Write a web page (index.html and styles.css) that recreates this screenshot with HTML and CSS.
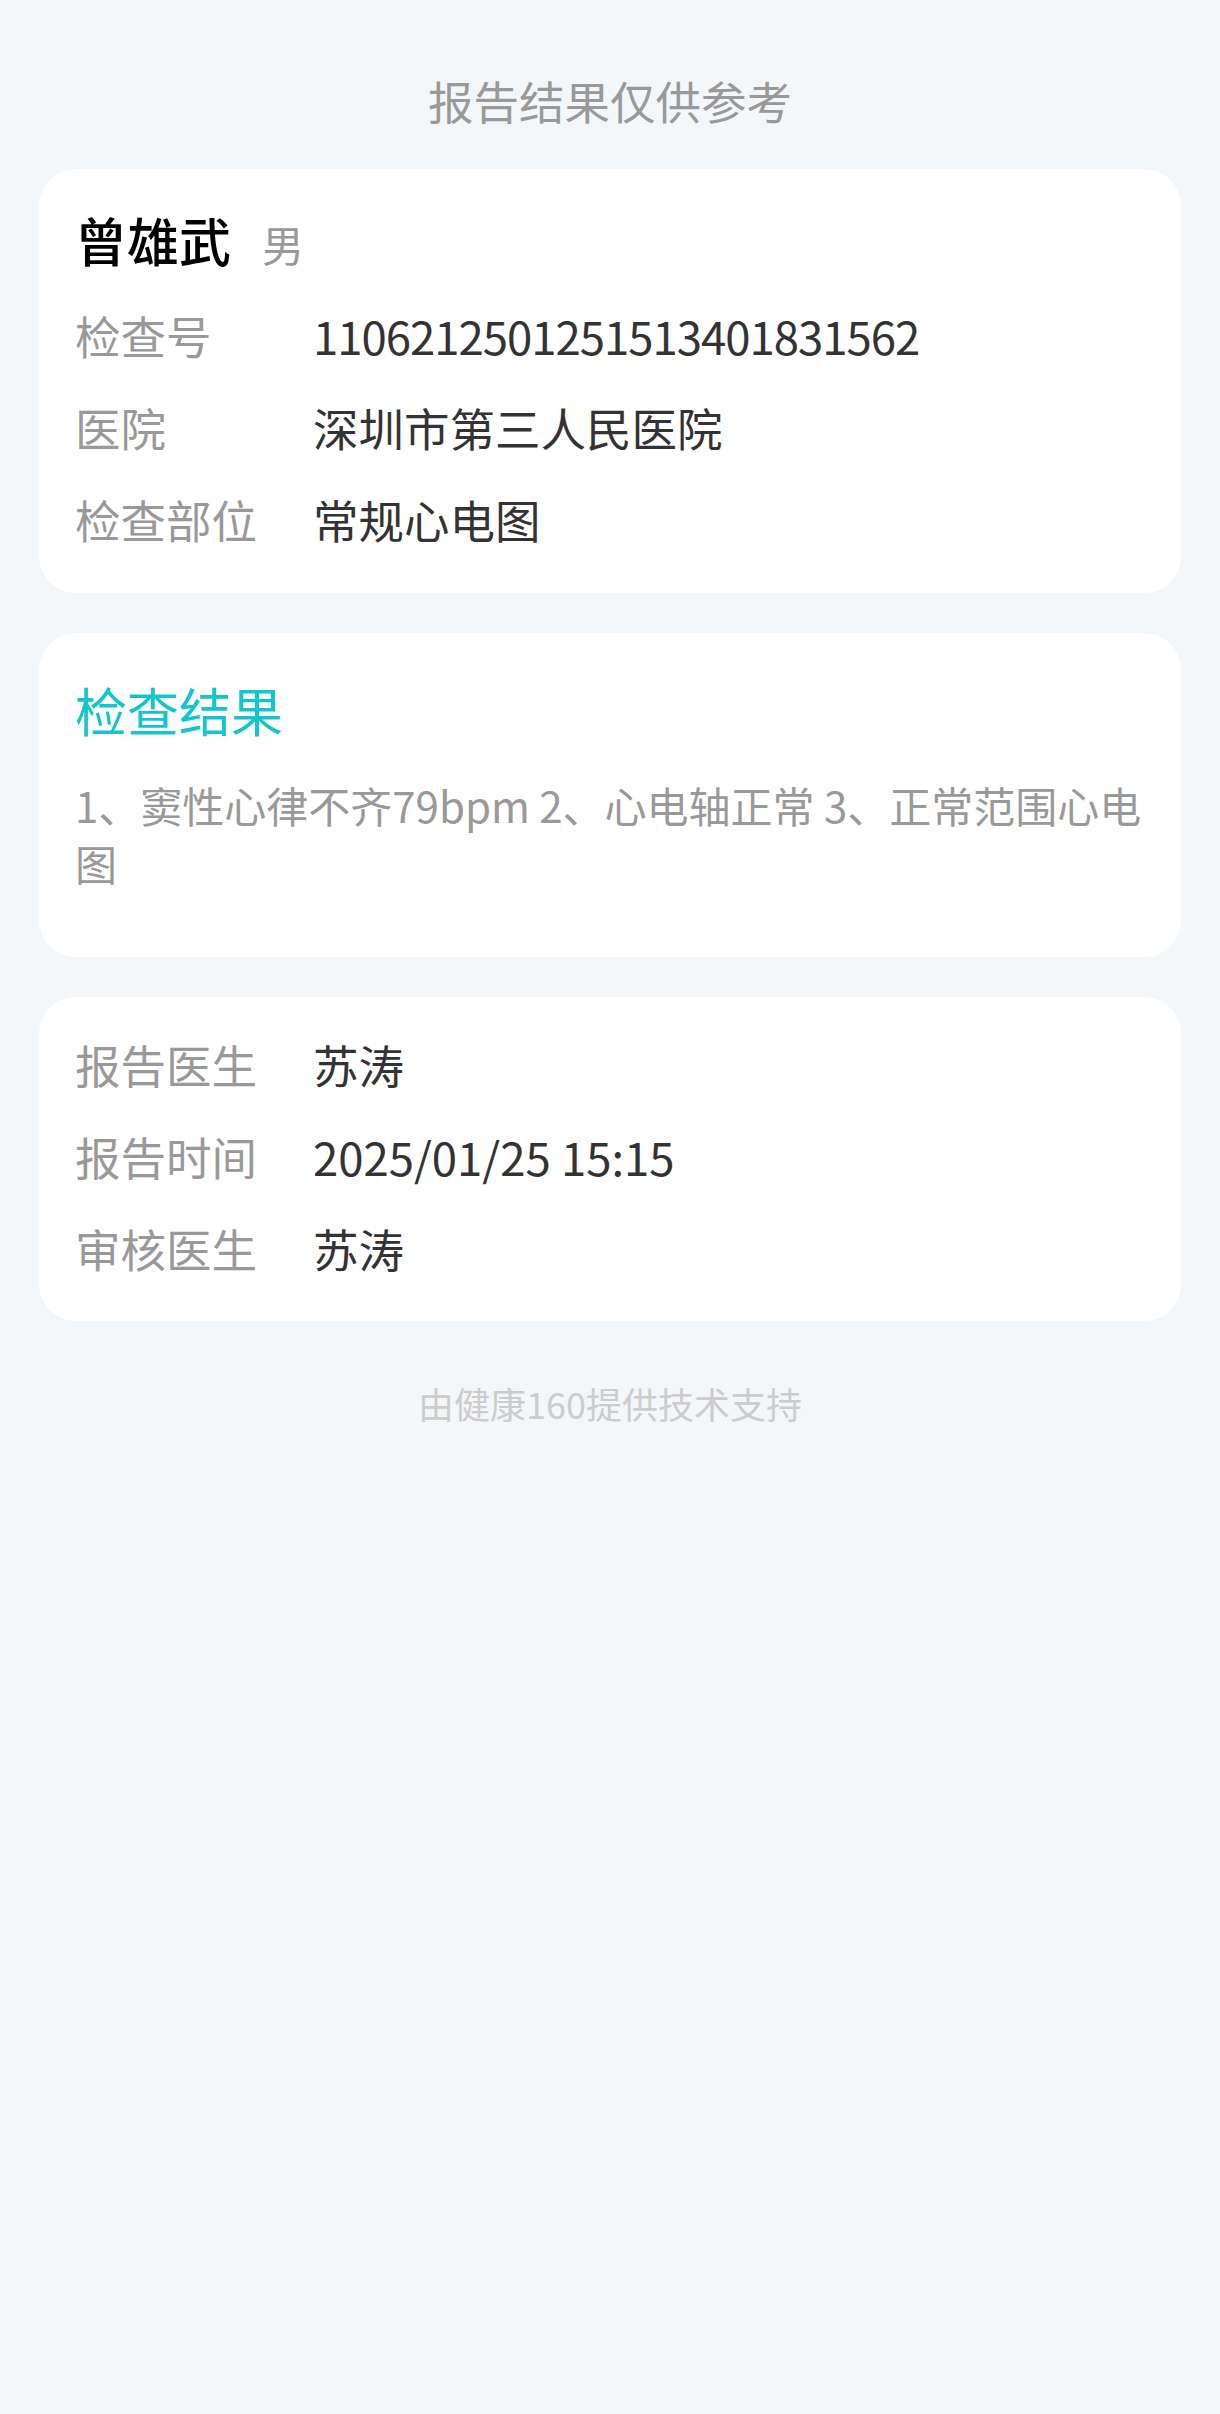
FILE: index.html
```html
<!DOCTYPE html>
<html lang="zh-CN">
<head>
<meta charset="utf-8">
<title>检查报告</title>
<link rel="stylesheet" href="styles.css">
</head>
<body>
<div class="page">
  <div class="notice">报告结果仅供参考</div>

  <section class="card card-info">
    <div class="patient">
      <span class="patient-name">曾雄武</span>
      <span class="patient-sex">男</span>
    </div>
    <div class="row"><span class="label">检查号</span><span class="value value-num">1106212501251513401831562</span></div>
    <div class="row"><span class="label">医院</span><span class="value">深圳市第三人民医院</span></div>
    <div class="row"><span class="label">检查部位</span><span class="value">常规心电图</span></div>
  </section>

  <section class="card card-result">
    <h2 class="result-title">检查结果</h2>
    <p class="result-text">1、窦性心律不齐79bpm 2、心电轴正常 3、正常范围心电图</p>
  </section>

  <section class="card card-doctor">
    <div class="row"><span class="label">报告医生</span><span class="value">苏涛</span></div>
    <div class="row"><span class="label">报告时间</span><span class="value">2025/01/25 15:15</span></div>
    <div class="row"><span class="label">审核医生</span><span class="value">苏涛</span></div>
  </section>

  <div class="footer">由健康160提供技术支持</div>
</div>
</body>
</html>
```
FILE: styles.css
```css
* { box-sizing: border-box; }
html, body {
  margin: 0;
  padding: 0;
  background: #f4f7fa;
}
body {
  font-family: "Noto Sans CJK SC", "Noto Sans", sans-serif;
  color: #333;
  min-height: 2414px;
}
.page {
  padding: 0 39px;
  display: flex;
  flex-direction: column;
}
.notice {
  padding: 68px 0 37px;
  line-height: 64px;
  font-size: 45.5px;
  color: #999;
  text-align: center;
}
.card {
  background: #fff;
  border-radius: 37px;
  padding-left: 36px;
  padding-right: 36px;
  display: flex;
  flex-direction: column;
}
.card + .card { margin-top: 40px; }
.card-info {
  padding-top: 36px;
  padding-bottom: 42px;
  gap: 28px;
}
.patient {
  display: flex;
  align-items: baseline;
  height: 70px;
  line-height: 70px;
}
.patient-name {
  font-size: 52px;
  font-weight: 500;
  color: #000;
}
.patient-sex {
  font-size: 42px;
  line-height: 60px;
  color: #999;
  margin-left: 31px;
}
.row {
  display: grid;
  grid-template-columns: 238px 1fr;
  line-height: 64px;
  font-size: 45.5px;
}
.label { color: #999; }
.value { color: #333; }
.value-num { letter-spacing: -1px; }
.card-result {
  padding-top: 41px;
  padding-bottom: 65px;
}
.result-title {
  margin: 0 0 30px;
  font-size: 52px;
  font-weight: 400;
  line-height: 72px;
  color: #15c5ce;
}
.result-text {
  margin: 0;
  font-size: 42px;
  line-height: 58px;
  color: #999;
}
.card-doctor {
  padding-top: 35px;
  padding-bottom: 41px;
  gap: 28px;
}
.footer {
  margin-top: 57px;
  line-height: 50px;
  font-size: 36px;
  color: #ccc;
  text-align: center;
}
```
